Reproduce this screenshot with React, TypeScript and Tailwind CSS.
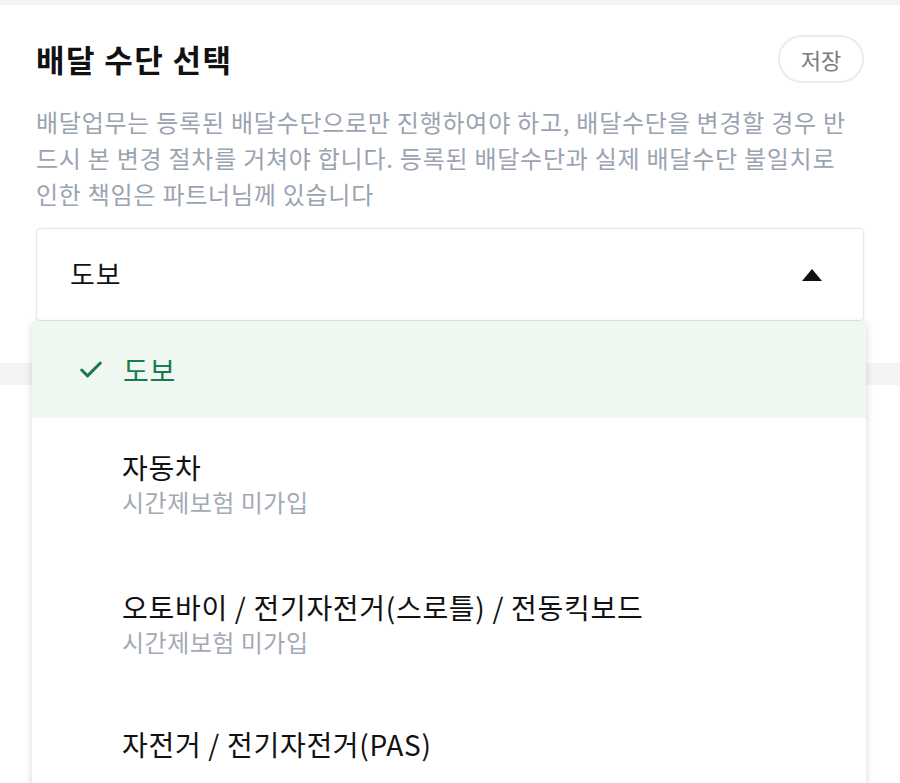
import { Check } from 'lucide-react'

const options = [
  { label: '도보', selected: true },
  { label: '자동차', sub: '시간제보험 미가입' },
  { label: '오토바이 / 전기자전거(스로틀) / 전동킥보드', sub: '시간제보험 미가입' },
  { label: '자전거 / 전기자전거(PAS)' },
]

const DeliveryMethod = () => {
  return (
    <div className="min-h-[783px] bg-white font-['Noto_Sans_CJK_KR',sans-serif] text-[#111]">
      <div className="h-[5px] bg-[#f3f3f3]"></div>
      <div className="px-9 pt-[30px] pb-[42px]">
        <div className="flex items-center justify-between">
          <div className="text-[31px] font-bold leading-[48px] tracking-[1.4px]">배달 수단 선택</div>
          <button className="h-12 w-[86px] rounded-full border-2 border-[#ececec] text-[22px] text-[#7b7b7b]">
            저장
          </button>
        </div>
        <p className="mt-[21px] text-[24px] leading-[36px] tracking-[0.75px] text-[#9aa3b1]">
          배달업무는 등록된 배달수단으로만 진행하여야 하고, 배달수단을 변경할 경우 반<br />
          드시 본 변경 절차를 거쳐야 합니다. 등록된 배달수단과 실제 배달수단 불일치로<br />
          인한 책임은 파트너님께 있습니다
        </p>
        <div className="relative mt-4">
          <div className="flex h-[93px] items-center justify-between rounded-sm border border-[#e6e6e6] pl-[33px] pr-[41px] shadow-[0_1px_3px_rgba(0,0,0,0.06)]">
            <span className="text-[27px] tracking-[1px]">도보</span>
            <svg width="20" height="12" viewBox="0 0 20 12">
              <path d="M10 0 L20 12 L0 12 Z" fill="#111" />
            </svg>
          </div>
          <div className="absolute top-full right-[-2px] left-[-4px] z-10 bg-white shadow-[0_3px_8px_rgba(0,0,0,0.16)]">
            {options.map((o) =>
              o.selected ? (
                <div key={o.label} className="flex h-[97px] items-center gap-[18px] bg-[#eef8f1] pl-[45px] text-[#1d7a4f]">
                  <Check size={28} strokeWidth={2.6} />
                  <span className="text-[28px] tracking-[0.7px]">{o.label}</span>
                </div>
              ) : o.sub ? (
                <div key={o.label} className="pt-[32px] pb-[38px] pl-[90px]">
                  <div className="text-[28px] leading-[34px] tracking-[0.7px]">{o.label}</div>
                  <div className="text-[24px] leading-[36px] tracking-[0.5px] text-[#a3aab5]">{o.sub}</div>
                </div>
              ) : (
                <div key={o.label} className="flex h-[92px] items-center pl-[90px]">
                  <span className="text-[28px] tracking-[0.7px]">{o.label}</span>
                </div>
              ),
            )}
          </div>
        </div>
      </div>
      <div className="h-[22px] bg-[#f4f4f4]"></div>
      <div className="h-[400px] bg-white"></div>
    </div>
  )
}

export default function App() {
  return <DeliveryMethod />
}
